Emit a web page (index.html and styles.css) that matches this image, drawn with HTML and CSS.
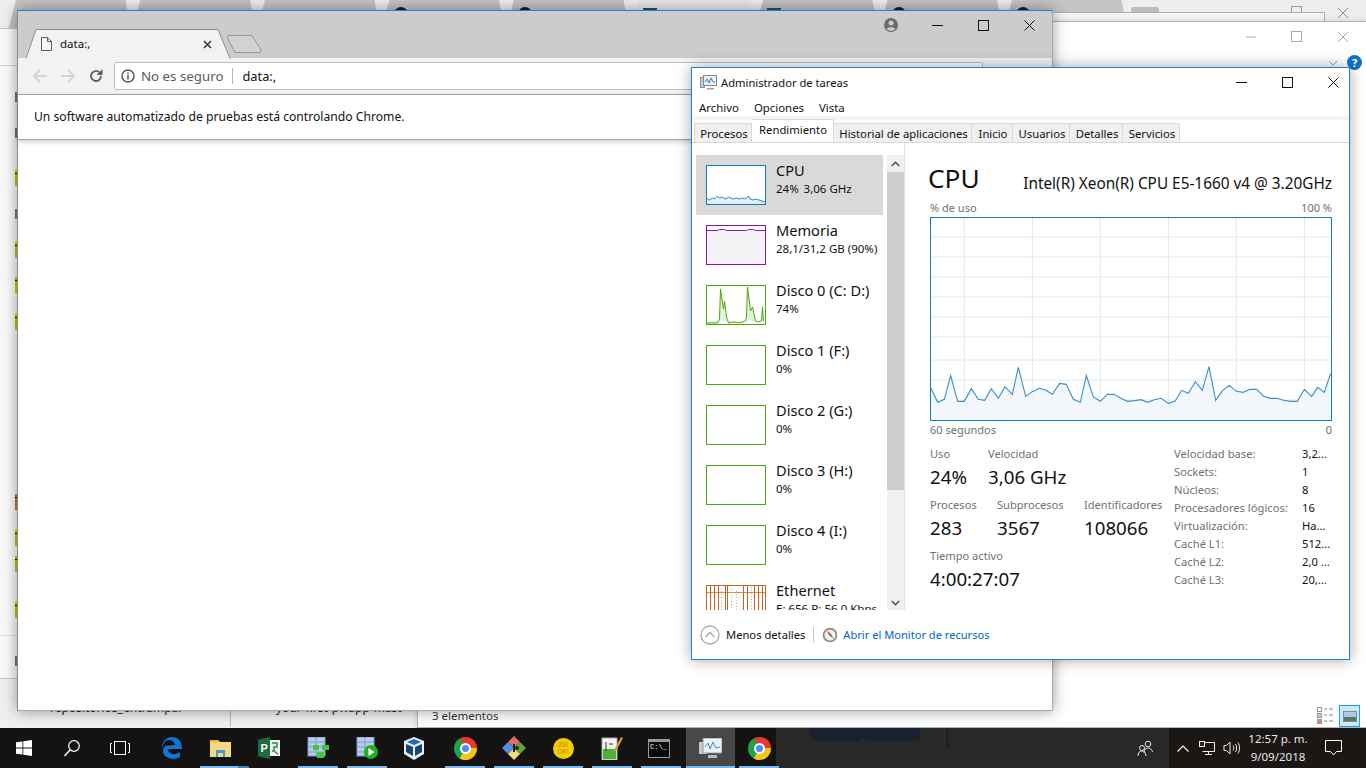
FILE: index.html
```html
<!DOCTYPE html>
<html lang="es">
<head>
<meta charset="utf-8">
<title>Administrador de tareas</title>
<link rel="stylesheet" href="styles.css">
</head>
<body>
<div class="desktop">

  <!-- Windows behind -->
  <div class="back-browser">
    <div class="back-tabs">
      <span class="back-tab"></span><span class="back-tab"></span><span class="back-tab"></span><span class="back-tab"><i class="fav"></i></span><span class="back-tab"><i class="fav"></i></span><span class="back-tab back-tab-on"><i class="fav fav-flag"></i></span><span class="back-tab"><i class="fav fav-flag"></i></span><span class="back-tab"><i class="fav"></i></span><span class="back-tab"><i class="fav"></i></span>
      <span class="back-newtab"></span>
    </div>
    <svg class="back-max" width="12" height="12" viewBox="0 0 12 12"><rect x=".5" y=".5" width="10" height="10" fill="none" stroke="#999"/></svg>
    <svg class="back-close" width="12" height="12" viewBox="0 0 12 12"><path d="M1 1l10 10M11 1L1 11" stroke="#8c8c8c" fill="none"/></svg>
    <div class="back-line"></div>
    <div class="back-line2"></div>
    <i class="mark m-y" style="top:170px"></i><i class="mark m-b" style="top:209px"></i><i class="mark m-y" style="top:242px"></i><i class="mark m-y" style="top:277px"></i><i class="mark m-y" style="top:314px"></i><i class="mark m-o" style="top:494px"></i><i class="mark m-y" style="top:530px"></i><i class="mark m-y" style="top:556px"></i><i class="mark m-y" style="top:602px"></i><i class="mark m-b" style="top:656px"></i><i class="mark m-b" style="top:92px"></i><i class="mark m-b" style="top:128px"></i>
    <div class="back-lines"></div>
    <div class="back-foot">
      <span class="foot-file">repositorios_entrampar</span>
      <span class="foot-sep"></span>
      <span class="foot-file foot-file2">your-first-pwapp-mast</span>
    </div>
  </div>

  <div class="back-win2"></div>

  <div class="explorer">
    <div class="ex-controls">
      <svg width="12" height="12" viewBox="0 0 12 12"><path d="M1 6h10" stroke="#aaa"/></svg>
      <svg width="12" height="12" viewBox="0 0 12 12"><rect x=".5" y=".5" width="10" height="10" fill="none" stroke="#aaa"/></svg>
      <svg width="12" height="12" viewBox="0 0 12 12"><path d="M1 1l10 10M11 1L1 11" stroke="#aaa" fill="none"/></svg>
    </div>
    <div class="ex-help-row">
      <svg width="10" height="6" viewBox="0 0 10 6"><path d="M1 1l4 4 4-4" stroke="#999" fill="none"/></svg>
      <span class="ex-help">?</span>
    </div>
    <div class="ex-status">
      <span class="ex-count">3 elementos</span>
      <span class="ex-views">
        <svg width="18" height="18" viewBox="0 0 18 18"><rect x=".5" y=".5" width="4" height="4" fill="#fff" stroke="#999"/><rect x=".5" y="6.500" width="4" height="4" fill="#bcd" stroke="#999"/><rect x=".5" y="12.500" width="4" height="4" fill="#d88" stroke="#999"/><path d="M7 2h3M12 2h4M7 8h3M12 8h4M7 14h3M12 14h4" stroke="#888"/></svg>
        <span class="ex-view-on"><svg width="14" height="11" viewBox="0 0 14 11"><rect x=".5" y=".5" width="13" height="10" fill="#dfe8ee" stroke="#888"/><rect x="1" y="6" width="12" height="4" fill="#4f7a63"/><rect x="1" y="1" width="12" height="5" fill="#a9cbe6"/></svg></span>
      </span>
    </div>
  </div>

  <!-- Chrome window -->
  <section class="chrome">
    <div class="ch-top">
      <div class="ch-tab">
        <svg class="ch-tab-bg" width="206" height="30" viewBox="0 0 206 30"><path d="M0 29.500L10 .5H192L204 29.500" fill="#f2f2f2" stroke="#8f8f8f"/></svg>
        <svg class="ch-tab-icon" width="12" height="14" viewBox="0 0 12 14"><path d="M1.500.5h6l4 4v9h-10zM7.500.5v4h4" fill="#f7f7f7" stroke="#5a5a5a"/></svg>
        <span class="ch-tab-title">data:,</span>
        <svg class="ch-tab-x" width="9" height="9" viewBox="0 0 9 9"><path d="M1 1l7 7M8 1L1 8" stroke="#333" stroke-width="1.500"/></svg>
      </div>
      <svg class="ch-new" width="35" height="18" viewBox="0 0 35 18"><path d="M1 .5H25L34 15c.3 1.500-.5 2.500-2 2.500H8L.5 3z" fill="#d2d2d2" stroke="#969696"/></svg>
      <div class="ch-ctrls">
        <svg class="ch-person" width="14" height="14" viewBox="0 0 14 14"><circle cx="7" cy="7" r="7" fill="#6b6b6b"/><circle cx="7" cy="5" r="2.500" fill="#ccc"/><path d="M2.800 11c1-2.400 7.400-2.400 8.400 0-1 1.200-2.500 1.800-4.200 1.800S3.800 12.200 2.800 11z" fill="#ccc"/></svg>
        <span class="wc"><svg width="11" height="11" viewBox="0 0 11 11"><path d="M0 5.500h11" stroke="#111"/></svg></span>
        <span class="wc"><svg width="11" height="11" viewBox="0 0 11 11"><rect x=".5" y=".5" width="10" height="10" fill="none" stroke="#111"/></svg></span>
        <span class="wc"><svg width="11" height="11" viewBox="0 0 11 11"><path d="M.5.500l10 10M10.500.5l-10 10" stroke="#111"/></svg></span>
      </div>
    </div>
    <div class="ch-toolbar">
      <svg class="ch-nav" width="16" height="14" viewBox="0 0 16 14"><path d="M15 7H2M8 1L2 7l6 6" stroke="#d4d4d4" stroke-width="1.800" fill="none"/></svg>
      <svg class="ch-nav" width="16" height="14" viewBox="0 0 16 14"><path d="M1 7h13M8 1l6 6-6 6" stroke="#d4d4d4" stroke-width="1.800" fill="none"/></svg>
      <svg class="ch-reload" width="14" height="14" viewBox="0 0 14 14"><path d="M12 7a5 5 0 1 1-1.500-3.600" stroke="#5f5f5f" stroke-width="1.800" fill="none"/><path d="M13.500 0v6h-6z" fill="#5f5f5f"/></svg>
      <div class="omni">
        <svg width="14" height="14" viewBox="0 0 14 14"><circle cx="7" cy="7" r="6" stroke="#555" stroke-width="1.500" fill="none"/><path d="M7 6v4.500M7 3.500v1.500" stroke="#555" stroke-width="1.500"/></svg>
        <span class="omni-warn">No es seguro</span>
        <span class="omni-sep"></span>
        <span class="omni-url">data:,</span>
      </div>
    </div>
    <div class="ch-info">Un software automatizado de pruebas está controlando Chrome.</div>
    <div class="ch-page"></div>
  </section>

  <!-- Task manager -->
  <section class="tm">
    <header class="tm-title">
      <svg width="17" height="15" viewBox="0 0 17 15"><rect x=".5" y="2.500" width="4" height="10" fill="#c9ced2" stroke="#8d9499"/><rect x="3.500" y=".5" width="13" height="10" fill="#e9f1f7" stroke="#7e8b94"/><path d="M5 7l2-3 2 4 2-5 2 4h2" stroke="#2f86c8" fill="none"/><path d="M7 13h7v1.500H7z" fill="#9aa2a7"/></svg>
      <span class="tm-title-text">Administrador de tareas</span>
      <div class="tm-ctrls">
        <span class="wc"><svg width="11" height="11" viewBox="0 0 11 11"><path d="M0 5.500h11" stroke="#111"/></svg></span>
        <span class="wc"><svg width="11" height="11" viewBox="0 0 11 11"><rect x=".5" y=".5" width="10" height="10" fill="none" stroke="#111"/></svg></span>
        <span class="wc"><svg width="11" height="11" viewBox="0 0 11 11"><path d="M.5.500l10 10M10.500.5l-10 10" stroke="#111"/></svg></span>
      </div>
    </header>
    <nav class="tm-menu"><span>Archivo</span><span>Opciones</span><span>Vista</span></nav>
    <div class="tm-tabs">
      <span class="tm-tab t1">Procesos</span><span class="tm-tab t2 tm-tab-on">Rendimiento</span><span class="tm-tab t3">Historial de aplicaciones</span><span class="tm-tab t4">Inicio</span><span class="tm-tab t5">Usuarios</span><span class="tm-tab t6">Detalles</span><span class="tm-tab t7">Servicios</span>
    </div>
    <div class="tm-body">
      <aside class="side">
        <div class="side-list">
          <div class="res res-on">
            <svg class="thumb" width="60" height="40" viewBox="0 0 60 40"><rect width="60" height="40" fill="#fff"/><path d="M.5 33l3 2 3-2 2 1 3-3 2 2 3-1 3 2 3-2 2 1 3 1 3-1 3 1 3-1 3 1 3-3 1.500 3 3 1 3-1 3 1 3 1 3 1 3-2v5H.5z" fill="#e3eff7" stroke="none"/><path d="M.5 33l3 2 3-2 2 1 3-3 2 2 3-1 3 2 3-2 2 1 3 1 3-1 3 1 3-1 3 1 3-3 1.500 3 3 1 3-1 3 1 3 1 3 1 3-2" fill="none" stroke="#2f88c2"/><rect x=".5" y=".5" width="59" height="39" fill="none" stroke="#117dbb"/></svg>
            <div class="res-text"><div class="res-name">CPU</div><div class="res-sub">24%&nbsp;&thinsp;3,06 GHz</div></div>
          </div>
          <div class="res">
            <svg class="thumb" width="60" height="40" viewBox="0 0 60 40"><rect x=".5" y=".5" width="59" height="39" fill="#f4f2f4" stroke="#8b12ae"/><rect x="1" y="1" width="58" height="4" fill="#fff"/><path d="M.5 5.500h11l2-1h5l2 1h20l2-1h5l2 1h10" fill="none" stroke="#8b12ae"/></svg>
            <div class="res-text"><div class="res-name">Memoria</div><div class="res-sub">28,1/31,2 GB (90%)</div></div>
          </div>
          <div class="res">
            <svg class="thumb" width="60" height="40" viewBox="0 0 60 40"><path d="M.5 38h11l2-4 1-30 3 20 1-8 2 16 2 6 6-1 4 1 4-1 3-1 1-4 1-30 3 24 2-4 3 14 2 1 4-1 1-14 1 14H.5z" fill="#e6f3dc"/><path d="M.5 38h11l2-4 1-30 3 20 1-8 2 16 2 6 6-1 4 1 4-1 3-1 1-4 1-30 3 24 2-4 3 14 2 1 4-1 1-14 1 14" fill="none" stroke="#4da60c"/><rect x=".5" y=".5" width="59" height="39" fill="none" stroke="#4da60c"/></svg>
            <div class="res-text"><div class="res-name">Disco 0 (C: D:)</div><div class="res-sub">74%</div></div>
          </div>
          <div class="res">
            <svg class="thumb" width="60" height="40" viewBox="0 0 60 40"><rect x=".5" y=".5" width="59" height="39" fill="none" stroke="#4da60c"/></svg>
            <div class="res-text"><div class="res-name">Disco 1 (F:)</div><div class="res-sub">0%</div></div>
          </div>
          <div class="res">
            <svg class="thumb" width="60" height="40" viewBox="0 0 60 40"><rect x=".5" y=".5" width="59" height="39" fill="none" stroke="#4da60c"/></svg>
            <div class="res-text"><div class="res-name">Disco 2 (G:)</div><div class="res-sub">0%</div></div>
          </div>
          <div class="res">
            <svg class="thumb" width="60" height="40" viewBox="0 0 60 40"><rect x=".5" y=".5" width="59" height="39" fill="none" stroke="#4da60c"/></svg>
            <div class="res-text"><div class="res-name">Disco 3 (H:)</div><div class="res-sub">0%</div></div>
          </div>
          <div class="res">
            <svg class="thumb" width="60" height="40" viewBox="0 0 60 40"><rect x=".5" y=".5" width="59" height="39" fill="none" stroke="#4da60c"/></svg>
            <div class="res-text"><div class="res-name">Disco 4 (I:)</div><div class="res-sub">0%</div></div>
          </div>
          <div class="res">
            <svg class="thumb" width="60" height="40" viewBox="0 0 60 40"><rect x=".5" y=".5" width="59" height="39" fill="#fff" stroke="#c7611f"/><path d="M1 7.500h58" stroke="#d98a58"/><path d="M4.500 0v40M8.500 0v40M12.500 0v40M19.500 0v40M21.500 0v40M37.500 0v40M41.500 0v40M48.500 0v40M52.500 0v40M56.500 0v40" stroke="#c7611f"/><path d="M15.500 0v40M25.500 4v36M30.500 6v34M45.500 2v38" stroke="#e5a585" stroke-dasharray="1 2"/></svg>
            <div class="res-text"><div class="res-name">Ethernet</div><div class="res-sub">E: 656 R: 56,0 Kbps</div></div>
          </div>
        </div>
        <div class="scroll">
          <span class="scroll-btn"><svg width="9" height="6" viewBox="0 0 9 6"><path d="M.8 5l3.700-3.700L8.200 5" fill="none" stroke="#505050" stroke-width="1.600"/></svg></span>
          <span class="scroll-thumb"></span>
          <span class="scroll-fill"></span>
          <span class="scroll-btn"><svg width="9" height="6" viewBox="0 0 9 6"><path d="M.8 1l3.700 3.700L8.200 1" fill="none" stroke="#505050" stroke-width="1.600"/></svg></span>
        </div>
      </aside>
      <main class="perf">
        <div class="perf-head"><span class="perf-name">CPU</span><span class="perf-model">Intel(R) Xeon(R) CPU E5-1660 v4 @ 3.20GHz</span></div>
        <div class="axis axis-top"><span>% de uso</span><span>100 %</span></div>
        <svg class="graph" width="402" height="204" viewBox="15 -369 1206 612">
          <path d="M15 -309H1221M15 -249H1221M15 -189H1221M15 -129H1221M15 -69H1221M15 -9H1221M15 60H1221M15 120H1221M15 180H1221" stroke="#d9eaf4" stroke-width="3" fill="none"/>
          <path d="M118 -369V243M322 -369V243M526 -369V243M730 -369V243M934 -369V243M1138 -369V243" stroke="#d9eaf4" stroke-width="3" fill="none"/>
          <path d="M18 145L38 187 58 178 77 107 98 184 118 184 139 146 160 178 179 181 199 146 220 175 240 140 262 163 280 82 302 169 322 155 343 145 362 150 382 163 404 130 424 133 445 178 466 187 484 107 505 171 526 184 547 163 567 163 587 175 608 184 628 182 648 179 668 187 688 179 708 175 730 190 750 184 770 151 790 160 811 125 832 151 852 80 872 181 893 151 913 136 934 154 955 157 975 148 995 148 1016 169 1036 175 1056 175 1076 181 1097 184 1117 184 1138 148 1160 169 1178 142 1198 157 1217 100V243H18Z" fill="#f1f6fa" fill-opacity=".85"/>
          <path d="M18 145L38 187 58 178 77 107 98 184 118 184 139 146 160 178 179 181 199 146 220 175 240 140 262 163 280 82 302 169 322 155 343 145 362 150 382 163 404 130 424 133 445 178 466 187 484 107 505 171 526 184 547 163 567 163 587 175 608 184 628 182 648 179 668 187 688 179 708 175 730 190 750 184 770 151 790 160 811 125 832 151 852 80 872 181 893 151 913 136 934 154 955 157 975 148 995 148 1016 169 1036 175 1056 175 1076 181 1097 184 1117 184 1138 148 1160 169 1178 142 1198 157 1217 100" fill="none" stroke="#3a90c6" stroke-width="3.300"/>
          <rect x="16.500" y="-367.500" width="1203" height="609" fill="none" stroke="#117dbb" stroke-width="3"/>
        </svg>
        <div class="axis axis-bottom"><span>60 segundos</span><span>0</span></div>
        <div class="stats">
          <div class="stats-left">
            <div class="stat-row">
              <div class="stat s-uso"><div class="stat-label">Uso</div><div class="stat-value">24%</div></div>
              <div class="stat"><div class="stat-label">Velocidad</div><div class="stat-value">3,06 GHz</div></div>
            </div>
            <div class="stat-row">
              <div class="stat s-proc"><div class="stat-label">Procesos</div><div class="stat-value">283</div></div>
              <div class="stat s-sub"><div class="stat-label">Subprocesos</div><div class="stat-value">3567</div></div>
              <div class="stat"><div class="stat-label">Identificadores</div><div class="stat-value">108066</div></div>
            </div>
            <div class="stat-row">
              <div class="stat"><div class="stat-label">Tiempo activo</div><div class="stat-value">4:00:27:07</div></div>
            </div>
          </div>
          <dl class="specs">
            <dt>Velocidad base:</dt><dd>3,2...</dd>
            <dt>Sockets:</dt><dd>1</dd>
            <dt>Núcleos:</dt><dd>8</dd>
            <dt>Procesadores lógicos:</dt><dd>16</dd>
            <dt>Virtualización:</dt><dd>Ha...</dd>
            <dt>Caché L1:</dt><dd>512...</dd>
            <dt>Caché L2:</dt><dd>2,0 ...</dd>
            <dt>Caché L3:</dt><dd>20,...</dd>
          </dl>
        </div>
      </main>
    </div>
    <footer class="tm-foot">
      <svg width="20" height="20" viewBox="0 0 20 20"><circle cx="10" cy="10" r="9" fill="#fff" stroke="#a8a8a8" stroke-width="1.300"/><path d="M5.500 12l4.500-4.500 4.500 4.500" fill="none" stroke="#a8a8a8" stroke-width="1.300"/></svg>
      <span class="foot-less">Menos detalles</span>
      <span class="tm-foot-sep"></span>
      <svg width="16" height="16" viewBox="0 0 16 16"><circle cx="8" cy="8" r="7.300" fill="#8d8d8d"/><circle cx="8" cy="8" r="5.500" fill="#f6f1e8"/><path d="M4.500 3.500L9 7 7.500 8.500z" fill="#d2321c"/><path d="M9 7l2.500 4.500L7.500 8.500z" fill="#666"/></svg>
      <span class="foot-link">Abrir el Monitor de recursos</span>
    </footer>
  </section>

  <!-- Taskbar -->
  <footer class="taskbar">
    <svg class="wall" width="150" height="22" viewBox="0 0 150 22"><path d="M0 0h110v9q0 4-6 4H60q-6 0-6-3v-4q0 4-5 7H10Q0 13 0 6zM136 0h3v20h-3z" fill="#17222e"/></svg>
    <span class="tb"><svg width="16" height="16" viewBox="0 0 16 16"><path d="M0 2.300l6.500-.9v6.200H0zM7.300 1.300L16 0v7.600H7.300zM0 8.400h6.500v6.200L0 13.700zM7.300 8.400H16V16l-8.700-1.200z" fill="#fff"/></svg></span>
    <span class="tb"><svg width="16" height="17" viewBox="0 0 16 17"><circle cx="10" cy="6" r="5.300" fill="none" stroke="#fff" stroke-width="1.200"/><path d="M6 10l-5.500 6" stroke="#fff" stroke-width="1.400"/></svg></span>
    <span class="tb"><svg width="20" height="14" viewBox="0 0 20 14"><rect x="4.500" y=".5" width="11" height="13" fill="none" stroke="#fff"/><path d="M2 2.500H.5v9H2M18 2.500h1.500v9H18" fill="none" stroke="#fff"/></svg></span>
    <span class="tb tb-app tb-first"><svg width="21" height="22" viewBox="0 0 21 22"><path d="M1 11C1 4 6 0 11 0c6 0 10 4 10 12H7c0 5 7 7 12 3v5c-7 4-17 1-17-6 0-2 1-4 3-6 1 2 2 0 9 0 0-3-3-5-6-5-3 0-5 2-7 8z" fill="#0a78d6"/></svg></span>
    <span class="tb tb-app tb-run tb-multi"><svg width="21" height="18" viewBox="0 0 21 18"><path d="M0 1h8l2 2h11v15H0z" fill="#f5d97e"/><path d="M0 1h8l2 2H0z" fill="#e2b93b"/><path d="M6 18v-7h9v7h-2v-4H8v4z" fill="#3f9bdd"/></svg></span>
    <span class="tb tb-app"><svg width="22" height="22" viewBox="0 0 22 22"><path d="M8 3h14v16H8z" fill="#eef2ee"/><path d="M0 2.500L12 0v22L0 19.500z" fill="#1d6b3a"/><text x="2.500" y="15" class="ic-txt">P</text><path d="M14 6h5v4h-3v4h-2M16 14l4 3" stroke="#2f8a4d" stroke-width="1.500" fill="none"/></svg></span>
    <span class="tb tb-app tb-run"><svg width="22" height="22" viewBox="0 0 22 22"><rect x="1" y="0" width="17" height="19" fill="#b8cdea" stroke="#7b9bc8"/><path d="M1 5h17M1 10h17M1 15h17M9 0v19" stroke="#7b9bc8"/><path d="M6 8h6v5H6zM15 8h7v5h-7zM10 15h7v6h-7z" fill="#43c43f"/></svg></span>
    <span class="tb tb-app tb-run"><svg width="22" height="22" viewBox="0 0 22 22"><rect x="1" y="0" width="17" height="19" fill="#b8cdea" stroke="#7b9bc8"/><path d="M1 5h17M1 10h17M1 15h17M9 0v19" stroke="#7b9bc8"/><circle cx="15" cy="15" r="7" fill="#1db31d"/><path d="M12.500 11l6 4-6 4z" fill="#fff"/></svg></span>
    <span class="tb tb-app tb-nudge"><svg width="20" height="23" viewBox="0 0 20 23"><path d="M10 0l10 4v13l-10 6L0 17V4z" fill="#e5edf5"/><path d="M10 2l7 3-7 3-7-3z" fill="#1f6aa8"/><path d="M2 7l7 3v9l-7-4zM18 7l-7 3v9l7-4z" fill="#17456e"/></svg></span>
    <span class="tb tb-app tb-run"><span class="ic-chrome"><i></i></span></span>
    <span class="tb tb-app tb-run"><svg width="24" height="24" viewBox="0 0 24 24"><path d="M12 0l6 6-6 6-6-6z" fill="#e26a6a"/><path d="M18 6l6 6-6 6-6-6z" fill="#5ea43a"/><path d="M6 6l6 6-6 6-6-6z" fill="#4f8ee8"/><path d="M12 12l6 6-6 6-6-6z" fill="#f2dc7a"/><path d="M11 8h2v8h-2z" fill="#222"/><circle cx="15" cy="12" r="2" fill="#222"/></svg></span>
    <span class="tb tb-app tb-run"><span class="ic-ok">200<br>OK!</span></span>
    <span class="tb tb-app tb-run"><svg width="22" height="24" viewBox="0 0 22 24"><path d="M1 2h15v22H1z" fill="#f4f4f4" stroke="#aaa"/><path d="M2 13h13v10H2z" fill="#4fb233"/><path d="M5 6v9M8 8h4" stroke="#333"/><path d="M13 14l7-13 2 1-7 13z" fill="#e59b2c"/></svg></span>
    <span class="tb tb-app tb-run tb-nudge"><span class="ic-cmd">C:\_</span></span>
    <span class="tb tb-app tb-run tb-active"><svg width="23" height="21" viewBox="0 0 23 21"><rect x="0" y="4" width="8" height="12" fill="#c4c9cd"/><rect x="4" y="0" width="19" height="15" fill="#eaf2f8" stroke="#8f9aa2"/><path d="M6 9l3-4 2 6 3-7 3 6 4-1" stroke="#3191d4" fill="none"/><path d="M9 17h9v3H9z" fill="#b7bcc0"/></svg></span>
    <span class="tb tb-app tb-run"><span class="ic-chrome"><i></i></span></span>
    <div class="tray">
      <svg class="t-people" width="17" height="17" viewBox="0 0 17 17"><circle cx="11" cy="4" r="2.800" fill="none" stroke="#e8e8e8"/><path d="M7 13c0-3 1.500-5 4-5s4 2 4.500 4" fill="none" stroke="#e8e8e8"/><circle cx="5" cy="8" r="2.500" fill="none" stroke="#e8e8e8"/><path d="M1 16c0-3 1.500-5 4-5s3.500 1.500 4 5" fill="none" stroke="#e8e8e8"/></svg>
      <svg class="t-up" width="12" height="7" viewBox="0 0 12 7"><path d="M.5 6.500L6 1l5.500 5.500" fill="none" stroke="#fff" stroke-width="1.100"/></svg>
      <svg class="t-net" width="16" height="14" viewBox="0 0 16 14"><path d="M3.500 1.500h12v9h-12M9.500 10.500v3M6 13.500h7" fill="none" stroke="#eee"/><rect x=".5" y=".5" width="5" height="5" fill="#222" stroke="#eee"/></svg>
      <svg class="t-vol" width="17" height="14" viewBox="0 0 17 14"><path d="M1 4.500h2.500L7 1v12L3.500 9.500H1z" fill="none" stroke="#eee"/><path d="M10 4.500c1 1.500 1 3.500 0 5M12.500 3c1.500 2 1.500 6 0 8M15 1.500c2 3 2 8 0 11" fill="none" stroke="#eee"/></svg>
      <div class="clock"><div>12:57 p. m.</div><div>9/09/2018</div></div>
      <svg class="t-msg" width="17" height="16" viewBox="0 0 17 16"><path d="M.5.500h16v11h-5l-3 3.500-3-3.500h-5z" fill="none" stroke="#fff"/></svg>
    </div>
  </footer>
</div>
</body>
</html>
```
FILE: styles.css
```css
* { box-sizing: border-box; }
html, body { margin: 0; padding: 0; height: 100%; }
body { overflow: hidden; background: #fff; font-family: "Noto Sans", "Open Sans", sans-serif; font-size: 11.500px; color: #111; }
svg { display: block; flex: none; }
.desktop { position: relative; width: 1366px; height: 768px; overflow: hidden; background: #fff; }

/* back windows */
.back-browser { position: absolute; left: 0; top: 0; width: 1366px; height: 728px; background: #fafafa; }
.back-tabs { display: flex; height: 28px; padding-left: 6px; background: #eeeeee; }
.back-tab { position: relative; width: 124.500px; height: 28px; background: #c4c4c4; flex: none; clip-path: polygon(2% 100%, 8% 0, 96% 0, 100% 100%); overflow: hidden; }
.back-tab-on { background: linear-gradient(#e6e6e6, #f4f4f4); }
.fav { position: absolute; left: 14px; top: 7px; width: 14px; height: 14px; border-radius: 50%; background: #1d1d1d; }
.fav-flag { border-radius: 0; height: 5px; top: 8px; background: #2c4a66; }
.back-newtab { width: 28px; height: 14px; margin: 7px 0 0 4px; background: #bdbdbd; border-radius: 2px; flex: none; }
.back-max { position: absolute; left: 1291px; top: 6px; }
.back-close { position: absolute; left: 1337px; top: 7px; }
.back-line { height: 1px; background: #c4c4c4; }
.back-line2 { position: absolute; left: 0; top: 65px; width: 17px; height: 1px; background: #cfcfcf; }
.mark { position: absolute; left: 15px; width: 2px; height: 16px; }
.m-y { background: linear-gradient(#c8c800 3px, #111 3px, #111 4px, #c8c800 4px); }
.m-b { background: #a36a4a; height: 10px; }
.m-o { background: linear-gradient(#d07030 3px, #111 3px, #111 4px, #d07030 4px); }
.back-lines { position: absolute; left: 0; top: 635px; width: 417px; height: 44px; border-top: 1px solid #dedede; border-bottom: 1px solid #c8c8c8; }
.back-foot { position: absolute; left: 0; top: 679px; width: 417px; height: 49px; background: #f0f0f0; }
.foot-file { position: absolute; left: 50px; top: 20px; font-size: 12px; color: #222; }
.foot-file2 { left: 276px; }
.foot-sep { position: absolute; left: 230px; top: 32px; width: 1px; height: 16px; background: #bbb; }

.back-win2 { position: absolute; left: 1000px; top: 12px; width: 325px; height: 30px; background: #f4f4f4; border: 1px solid #b0b0b0; }

.explorer { position: absolute; left: 417px; top: 21px; width: 949px; height: 707px; background: #fff; border: 1px solid #b4b4b4; border-right: 0; display: flex; flex-direction: column; box-shadow: 0 0 6px rgba(0,0,0,.15); }
.ex-controls { display: flex; justify-content: flex-end; align-items: center; gap: 34px; height: 30px; padding: 0 17px 0 0; }
.ex-help-row { position: absolute; top: 33px; right: 4px; display: flex; align-items: center; gap: 9px; }
.ex-help { width: 15px; height: 15px; border-radius: 50%; background: #1273c4; color: #fff; font-weight: 700; font-size: 11px; line-height: 15px; text-align: center; }
.ex-status { margin-top: auto; display: flex; justify-content: space-between; align-items: flex-end; height: 23px; padding: 0 6px 0 14px; }
.ex-count { font-size: 11.500px; color: #333; line-height: 20px; padding-bottom: 1px; }
.ex-views { display: flex; align-items: center; gap: 4px; }
.ex-view-on { display: flex; align-items: center; justify-content: center; width: 21px; height: 22px; background: #cce8ff; border: 1px solid #26a0da; }

/* chrome */
.chrome { position: absolute; left: 17px; top: 10px; width: 1036px; height: 701px; display: flex; flex-direction: column; background: #fff; border-top: 1px solid #1a86e0; border-left: 1px solid #8c8c8c; border-right: 1px solid #a8a8a8; border-bottom: 1px solid #a8a8a8; box-shadow: 0 0 14px rgba(0,0,0,.4); }
.ch-top { height: 47px; background: #ccc; display: flex; align-items: flex-end; position: relative; flex: none; padding-left: 8px; }
.ch-tab { position: relative; width: 206px; height: 29px; display: flex; align-items: center; padding-left: 14px; flex: none; }
.ch-tab-bg { position: absolute; left: 0; top: 0; }
.ch-tab-icon { position: relative; }
.ch-tab-title { position: relative; margin-left: 8px; font-size: 11.500px; }
.ch-tab-x { position: absolute; left: 177px; top: 11px; }
.ch-new { margin: 0 0 5px -5px; }
.ch-ctrls { position: absolute; right: 0; top: 0; height: 28px; display: flex; align-items: center; }
.ch-person { margin-right: 16px; }
.wc { display: flex; width: 46px; height: 28px; align-items: center; justify-content: center; flex: none; }
.ch-toolbar { height: 37px; background: #f2f2f2; border-bottom: 1px solid #a6a6a6; display: flex; align-items: center; padding: 0 69px 0 14px; gap: 12px; flex: none; }
.ch-reload { margin-left: 1px; }
.omni { flex: 1; height: 28px; margin-left: -1px; background: #fff; border: 1px solid #bfbfbf; border-radius: 2px; display: flex; align-items: center; padding-left: 6px; }
.omni-warn { margin-left: 6px; font-size: 13.300px; color: #5a5a5a; }
.omni-sep { width: 1px; height: 16px; margin: 0 9px; background: #b5b5b5; }
.omni-url { font-size: 12.800px; color: #111; }
.ch-info { height: 45px; padding: 0 0 1px 16px; display: flex; align-items: center; background: #fff; border-bottom: 1px solid #a6a6a6; box-shadow: 0 2px 5px rgba(0,0,0,.2); font-size: 12.150px; color: #111; flex: none; position: relative; }
.ch-page { flex: 1; background: #fff; }

/* task manager */
.tm { position: absolute; left: 691px; top: 67px; width: 659px; height: 593px; background: #fff; border: 1px solid #1883d7; display: flex; flex-direction: column; box-shadow: 0 0 14px rgba(0,0,0,.35); }
.tm-title { height: 29px; display: flex; align-items: center; padding-left: 8px; position: relative; flex: none; }
.tm-title-text { margin-left: 4px; font-size: 11.200px; }
.tm-ctrls { position: absolute; right: -7px; top: 0; height: 29px; display: flex; }
.tm-ctrls .wc { height: 29px; }
.tm-menu { height: 19px; display: flex; align-items: center; padding: 1px 0 0 7px; gap: 15px; font-size: 11.400px; flex: none; }
.tm-tabs { height: 27px; display: flex; align-items: flex-end; padding-left: 2px; background: linear-gradient(#f4f4f4 4px, #fff 4px); border-bottom: 1px solid #d9d9d9; flex: none; }
.tm-tab { height: 19px; display: flex; align-items: center; justify-content: center; padding-left: 2px; background: #f0f0f0; border: 1px solid #d9d9d9; border-left: 0; border-bottom: 0; font-size: 11.300px; flex: none; overflow: hidden; white-space: nowrap; }
.tm-tab-on { height: 23px; background: #fff; padding: 0 0 3px 1px; }
.t1 { width: 58px; border-left: 1px solid #d9d9d9; }
.t2 { width: 82px; }
.t3 { width: 138px; }
.t4 { width: 41px; }
.t5 { width: 57px; }
.t6 { width: 53px; }
.t7 { width: 57px; }
.tm-body { height: 467px; display: flex; flex: none; overflow: hidden; }
.side { width: 213px; display: flex; padding: 12px 0 0 4px; border-right: 1px solid #e2e2e2; flex: none; overflow: hidden; }
.side-list { width: 187px; flex: none; }
.res { height: 60px; display: flex; padding: 10px 0 0 10px; gap: 10px; }
.res-on { background: #d9d9d9; }
.res-name { font-size: 14.600px; line-height: 16px; margin-top: -3px; }
.res-sub { font-size: 11.500px; line-height: 16px; margin-top: 3px; white-space: nowrap; }
.scroll { width: 17px; margin-left: 4px; display: flex; flex-direction: column; flex: none; height: 456px; }
.scroll-btn { height: 17px; display: flex; align-items: center; justify-content: center; background: #f0f0f0; flex: none; }
.scroll-thumb { height: 318px; background: #cdcdcd; flex: none; }
.scroll-fill { flex: 1; background: #f0f0f0; }
.perf { flex: 1; padding: 16px 17px 0 25px; min-width: 0; }
.perf-head { display: flex; justify-content: space-between; align-items: baseline; height: 39px; margin-left: -2px; }
.perf-name { font-size: 26.300px; line-height: 38px; }
.perf-model { font-size: 15.350px; position: relative; top: 1px; }
.axis { display: flex; justify-content: space-between; font-size: 11px; color: #707070; line-height: 14px; }
.axis-top { margin-top: 3px; height: 14px; }
.graph { margin-top: 2px; }
.axis-bottom { margin-top: 2px; }
.stats { display: flex; margin-top: 9px; }
.stats-left { width: 244px; flex: none; }
.stat-row { display: flex; height: 51px; }
.s-uso { width: 58px; }
.s-proc { width: 67px; }
.s-sub { width: 87px; }
.stat-label { font-size: 11.100px; line-height: 15px; color: #707070; }
.stat-value { font-size: 18.700px; line-height: 24px; margin-top: 4px; white-space: nowrap; }
.specs { display: grid; grid-template-columns: 128px 1fr; grid-auto-rows: 18px; margin: 0; font-size: 11.200px; line-height: 15px; }
.specs dt { color: #707070; white-space: nowrap; }
.specs dd { margin: 0; color: #111; white-space: nowrap; }
.tm-foot { flex: 1; display: flex; align-items: center; padding-left: 8px; background: #fff; position: relative; }
.foot-less { margin-left: 6px; font-size: 11.200px; }
.tm-foot-sep { width: 1px; height: 16px; margin: 0 8px; background: #c8c8c8; }
.foot-link { margin-left: 5px; font-size: 11.100px; color: #0066cc; }

/* taskbar */
.taskbar { position: absolute; left: 0; top: 728px; width: 1366px; height: 40px; display: flex; background: linear-gradient(90deg, #141312 0, #151311 776px, #282828 776px, #282828 1169px, #1a1715 1169px); }
.wall { position: absolute; left: 810px; top: 0; }
.tb { position: relative; width: 48px; height: 40px; display: flex; align-items: center; justify-content: center; flex: none; }
.tb-app { width: 49px; }
.tb-first { margin-left: 2.500px; }
.tb-nudge > svg, .tb-nudge > span { margin-right: 4px; }
.tb-run::after { content: ""; position: absolute; left: 4.500px; right: 4.500px; bottom: 0; height: 2px; background: #76b9ed; }
.tb-multi::after { right: -4px; left: 4.500px; background: linear-gradient(90deg, #76b9ed 78%, #4e7fa8 78%); }
.tb-active { background: #484848; }
.tb-active::after { left: 0; right: 0; }
.ic-txt { font-family: "Liberation Sans", sans-serif; font-size: 11px; font-weight: 700; fill: #fff; }
.ic-chrome { position: relative; display: block; width: 23px; height: 23px; border-radius: 50%; background: conic-gradient(from 30deg, #e33b2e 0 60deg, #f7c518 60deg 180deg, #1fa349 180deg 300deg, #e33b2e 300deg); }
.ic-chrome i { position: absolute; left: 6px; top: 6px; width: 11px; height: 11px; border-radius: 50%; background: #4d8cf0; border: 2px solid #fff; }
.ic-ok { width: 21px; height: 21px; border-radius: 50%; background: #f5d000; color: #a88a00; font-family: "Liberation Sans", sans-serif; font-size: 6.500px; line-height: 7.500px; text-align: center; padding-top: 3px; }
.ic-cmd { width: 22px; height: 19px; background: #0c0c0c; border: 1px solid #9a9a9a; border-top-width: 3px; color: #fff; font-family: "Liberation Mono", monospace; font-size: 7px; line-height: 11px; padding-left: 1px; }
.tray { position: absolute; left: 0; top: 0; width: 100%; height: 40px; pointer-events: none; }
.tray svg, .clock { position: absolute; }
.t-people { left: 1137px; top: 12px; }
.t-up { left: 1177px; top: 17px; }
.t-net { left: 1199px; top: 13px; }
.t-vol { left: 1223px; top: 13px; }
.clock { left: 1243px; top: 2px; width: 70px; text-align: center; color: #e8e8e8; font-size: 11.500px; line-height: 18px; }
.t-msg { left: 1325px; top: 12px; }
```
